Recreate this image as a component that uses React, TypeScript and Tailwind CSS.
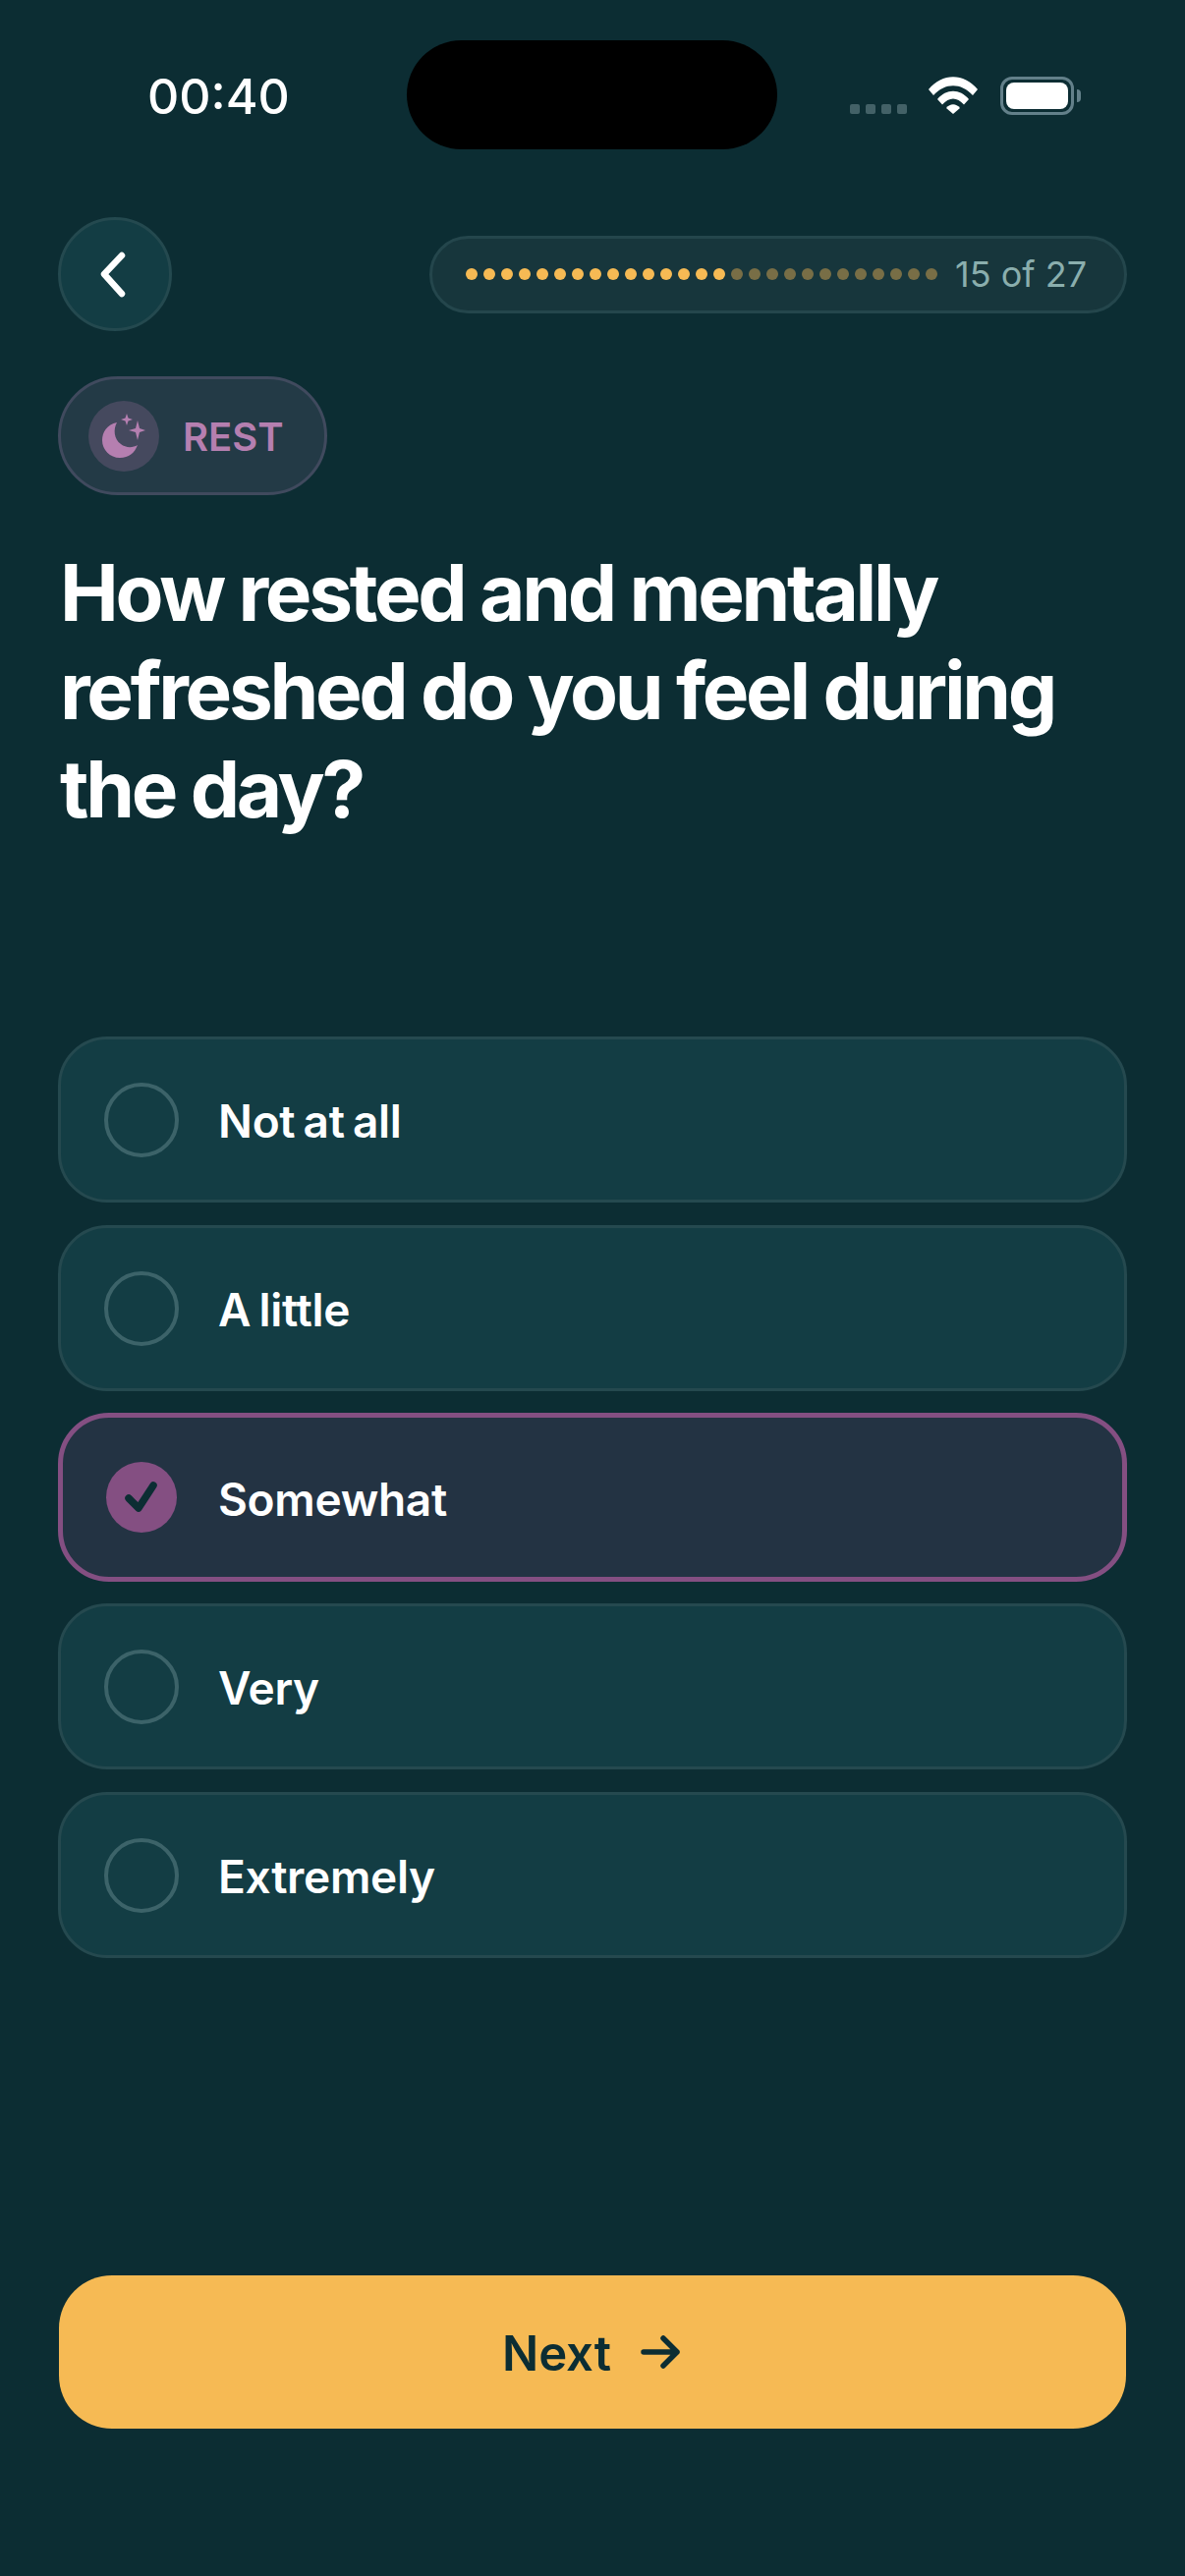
const options = [
  { label: 'Not at all' },
  { label: 'A little' },
  { label: 'Somewhat', selected: true },
  { label: 'Very' },
  { label: 'Extremely' },
];

function MoonIcon() {
  return (
    <svg width="44" height="46" viewBox="0 0 44 46" fill="#b57fb0">
      <path d="M15 9 C5 11 0 19 0 27 C0 37 8 45 18 45 C27 45 33 40 36 32 C31 35 24 35 19 31 C12 26 11 16 15 9 Z" />
      <path d="M25 0 L26.500 4.500 L31 6 L26.500 7.500 L25 12 L23.500 7.500 L19 6 L23.500 4.500 Z" />
      <path d="M36 7 L38 15 L44 17 L38 19 L36 27 L34 19 L27 17 L34 15 Z" />
    </svg>
  );
}

function StatusBar() {
  return (
    <div className="h-[193px] flex items-start relative">
      <span className="absolute left-[150px] top-[69px] text-[50px] leading-[58px] font-medium text-white">00:40</span>
      <div className="absolute left-[414px] top-[41px] w-[377px] h-[111px] bg-black rounded-[56px]" />
      <div className="absolute left-[865px] top-[106px] flex gap-[6px]">
        <div className="w-[10px] h-[10px] rounded-[2px] bg-[#436167]" />
        <div className="w-[10px] h-[10px] rounded-[2px] bg-[#436167]" />
        <div className="w-[10px] h-[10px] rounded-[2px] bg-[#436167]" />
        <div className="w-[10px] h-[10px] rounded-[2px] bg-[#436167]" />
      </div>
      <svg className="absolute left-[945px] top-[78px]" width="50" height="38" viewBox="0 0 50 38" fill="white">
        <path d="M0 13 C14 -4 36 -4 50 13 L45 19 C33 6 17 6 5 19 Z" />
        <path d="M9 23 C18 12 32 12 41 23 L36 28.500 C29 20.500 21 20.500 14 28.500 Z" />
        <path d="M18 32 C22 27 28 27 32 32 L25 38 Z" />
      </svg>
      <div className="absolute left-[1018px] top-[78px] w-[75px] h-[39px] rounded-[12px] border-[3px] border-[#63808a] p-[3px]">
        <div className="w-full h-full rounded-[8px] bg-white" />
      </div>
      <div className="absolute left-[1096px] top-[91px] w-[4px] h-[13px] rounded-r-full bg-[#63808a]" />
    </div>
  );
}

export default function App() {
  return (
    <div className="w-[1206px] h-[2622px] bg-[#0c2d33] font-['Inter',sans-serif] overflow-hidden">
      <StatusBar />

      <div className="px-[59px]">
        <div className="flex items-center justify-between h-[116px] mt-[28px]">
          <button className="w-[116px] h-[116px] rounded-full bg-[#133d44] border-[3px] border-[#24494f] flex items-center justify-center">
            <svg className="mr-[9px]" width="32" height="50" viewBox="0 0 32 50" fill="none" stroke="white" strokeWidth="6.500" strokeLinecap="round" strokeLinejoin="round">
              <path d="M27 6 L9 25 L27 45" />
            </svg>
          </button>
          <div className="w-[710px] h-[79px] rounded-full bg-[#17363c] border-[3px] border-[#24464c] flex items-center pl-[34px] gap-[18px]">
            <div className="flex gap-[6px]">
              {Array.from({ length: 27 }).map((_, i) => (
                <div key={i} className={i < 15 ? 'w-[12px] h-[12px] rounded-full bg-[#f6ba54]' : 'w-[12px] h-[12px] rounded-full bg-[#786e46]'} />
              ))}
            </div>
            <span className="text-[36px] leading-[40px] text-[#8aaead]">15 of 27</span>
          </div>
        </div>

        <div className="mt-[46px] w-[274px] h-[121px] rounded-full bg-[#233a46] border-[3px] border-[#404a5e] flex items-center pl-[28px] gap-[24px]">
          <div className="w-[72px] h-[72px] rounded-full bg-[#45495e] flex items-center justify-center">
            <MoonIcon />
          </div>
          <span className="pt-[2px] text-[40px] leading-[48px] font-semibold text-[#b57fb0]">REST</span>
        </div>

        <h1 className="mt-[49px] ml-[2px] text-[80px] leading-[100px] font-bold tracking-[-3.3px] text-white">
          How rested and mentally<br />refreshed do you feel during<br />the day?
        </h1>

        <div className="mt-[202px] flex flex-col gap-[23px]">
          {options.map((o) => (
            <div
              key={o.label}
              className={
                o.selected
                  ? 'h-[172px] -my-[1px] rounded-[52px] bg-[#233343] border-[5px] border-[#844f82] flex items-center pl-[42px] gap-[40px]'
                  : 'h-[169px] rounded-[50px] bg-[#133d44] border-[3px] border-[#25494f] flex items-center pl-[44px] gap-[40px]'
              }
            >
              {o.selected ? (
                <div className="w-[72px] h-[72px] mx-[2px] rounded-full bg-[#844f82] flex items-center justify-center">
                  <svg width="72" height="72" viewBox="0 0 72 72" fill="none" stroke="#0c2d33" strokeWidth="7.500" strokeLinecap="round" strokeLinejoin="round">
                    <path d="M23 37 L33 47 L48 24" />
                  </svg>
                </div>
              ) : (
                <div className="w-[76px] h-[76px] rounded-full border-[4px] border-[#3c6369]" />
              )}
              <span className="pt-[3px] text-[46px] leading-[56px] font-semibold tracking-[-0.3px] [word-spacing:-3px] text-white">{o.label}</span>
            </div>
          ))}
        </div>
      </div>

      <div className="px-[60px] mt-[323px]">
        <button className="w-full h-[156px] rounded-[54px] bg-[#f6ba54] flex items-center justify-center gap-[30px] pr-[3px]">
          <span className="pt-[3px] text-[49px] leading-[60px] font-semibold text-[#0c2d33]">Next</span>
          <svg width="40" height="34" viewBox="0 0 40 34" fill="none" stroke="#0c2d33" strokeWidth="5.500" strokeLinecap="round" strokeLinejoin="round">
            <path d="M3 17 L37 17 M23 3 L37 17 L23 31" />
          </svg>
        </button>
      </div>
    </div>
  );
}
